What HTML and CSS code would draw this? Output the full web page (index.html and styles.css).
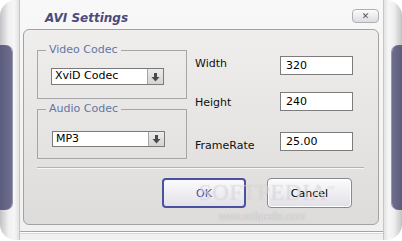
FILE: index.html
```html
<!DOCTYPE html>
<html lang="en">
<head>
  <meta charset="UTF-8" />
  <title>AVI Settings</title>
  <link rel="stylesheet" href="styles.css">
</head>
<body>
  <div class="window">
    <div class="gutter gutter-left"><div class="pill"></div></div>

    <div class="main">
      <div class="titlebar">
        <div class="title">AVI Settings</div>
        <button class="close-btn">&#x2715;</button>
      </div>

      <div class="panel">
        <div class="panel-body">
          <div class="codecs">
            <fieldset class="group group-video">
              <legend>Video Codec</legend>
              <div class="combo">
                <span class="combo-value">XviD Codec</span>
                <span class="combo-arrow">
                  <svg width="9" height="10" viewBox="0 0 9 10"><rect x="3" y="1" width="3" height="4" fill="#4a4a4a"/><path d="M0.5 5 H8.5 L4.5 9.5 Z" fill="#4a4a4a"/></svg>
                </span>
              </div>
            </fieldset>
            <fieldset class="group group-audio">
              <legend>Audio Codec</legend>
              <div class="combo">
                <span class="combo-value">MP3</span>
                <span class="combo-arrow">
                  <svg width="9" height="10" viewBox="0 0 9 10"><rect x="3" y="1" width="3" height="4" fill="#4a4a4a"/><path d="M0.5 5 H8.5 L4.5 9.5 Z" fill="#4a4a4a"/></svg>
                </span>
              </div>
            </fieldset>
          </div>

          <div class="fields">
            <div class="row row-width">
              <label>Width</label>
              <div class="field">320</div>
            </div>
            <div class="row row-height">
              <label>Height</label>
              <div class="field">240</div>
            </div>
            <div class="row row-rate">
              <label>FrameRate</label>
              <div class="field">25.00</div>
            </div>
          </div>
        </div>

        <div class="divider"></div>

        <div class="buttons">
          <button class="btn btn-ok">OK</button>
          <button class="btn btn-cancel">Cancel</button>
        </div>
      </div>

      <div class="bottom-line"></div>
    </div>

    <div class="gutter gutter-right"><div class="pill"></div></div>

    <div class="watermark">
      <div class="wm-big">SOFTPEDIA<sup>&trade;</sup></div>
      <div class="wm-small">www.softpedia.com</div>
    </div>
  </div>
</body>
</html>
```

FILE: styles.css
```css
body {
  margin: 0;
  background: #ffffff;
  font-family: 'DejaVu Sans', Verdana, sans-serif;
  font-size: 11px;
}
.window {
  position: relative;
  display: flex;
  width: 402px;
  height: 240px;
  border-radius: 16px;
  overflow: hidden;
  background: #f2f2f2;
}
.gutter {
  display: flex;
  align-items: flex-start;
}
.gutter-left {
  width: 19px;
  background: linear-gradient(to right, #c2c2c6, #f0f0f0 45%, #f6f6f6 75%, #e2e2e2);
}
.gutter-right {
  width: 18px;
  justify-content: flex-end;
  background: linear-gradient(to left, #c2c2c6, #f0f0f0 45%, #f6f6f6 75%, #e2e2e2);
}
.pill {
  margin-top: 45px;
  width: 12px;
  height: 165px;
  background: linear-gradient(to right, #5c5c7e, #6e6e8e);
}
.gutter-left .pill {
  border-radius: 0 7px 7px 0;
  box-shadow: 1px 0 0 #9898ac;
}
.gutter-right .pill {
  width: 10px;
  border-radius: 7px 0 0 7px;
  background: linear-gradient(to left, #5c5c7e, #6e6e8e);
  box-shadow: -1px 0 0 #9898ac;
}
.main {
  width: 363px;
  display: flex;
  flex-direction: column;
  border-left: 1px solid #c6c6c6;
  border-right: 1px solid #c6c6c6;
  background: linear-gradient(#f8f8f8, #f0f0f0);
}
.titlebar {
  display: flex;
  justify-content: space-between;
  align-items: flex-start;
  height: 29px;
}
.title {
  padding: 11px 0 0 25px;
  line-height: 14px;
  font-size: 12px;
  font-weight: bold;
  font-style: italic;
  color: #4a4a7c;
}
.close-btn {
  margin: 9px 4px 0 0;
  width: 27px;
  height: 14px;
  padding: 0;
  border: 1px solid #b0b0b4;
  border-radius: 4px;
  background: linear-gradient(#fcfcfc, #dedee2);
  color: #555560;
  font-family: 'DejaVu Sans', sans-serif;
  font-size: 9px;
  line-height: 12px;
}
.panel {
  box-sizing: border-box;
  height: 196px;
  margin: 0 4px 0 3px;
  padding: 14px 14px 0 13px;
  border: 1px solid #a2a2a2;
  border-radius: 6px;
  background: linear-gradient(#f0eeec, #dedcdb);
}
.panel-body {
  display: flex;
}
.codecs {
  width: 150px;
}
.group {
  margin: 0;
  padding: 0 13px;
  min-width: 0;
  border: 1px solid #a6a6a8;
}
.group legend {
  margin-left: -5px;
  padding: 0 3px;
  line-height: 12px;
  color: #6276a4;
}
.group-video {
  padding-bottom: 13px;
}
.group-video .combo {
  margin-top: 12px;
  height: 17px;
}
.group-audio {
  margin-top: 4px;
  padding-bottom: 11px;
}
.group-audio .combo {
  margin-top: 16px;
  margin-left: 1px;
  height: 16px;
}
.combo {
  box-sizing: border-box;
  display: flex;
  width: 113px;
  border: 1px solid #7a7a7a;
  background: #ffffff;
}
.combo-value {
  flex: 1;
  padding-left: 3px;
  color: #000000;
  line-height: 14px;
}
.combo-arrow {
  width: 15px;
  display: flex;
  align-items: center;
  justify-content: center;
  border-left: 1px solid #a4a4a4;
  background: linear-gradient(#ececec, #d4d4d4);
}
.fields {
  margin-left: 8px;
  padding-top: 12px;
}
.row {
  display: flex;
  align-items: center;
  height: 19px;
}
.row label {
  width: 85px;
  color: #101010;
}
.row-width label {
  margin-top: -4px;
}
.row-height {
  margin-top: 17px;
}
.row-height label {
  margin-top: 1px;
}
.row-rate {
  margin-top: 21px;
}
.row-rate label {
  margin-top: 7px;
}
.field {
  box-sizing: border-box;
  width: 73px;
  height: 19px;
  padding-left: 5px;
  border: 1px solid #7c7c7c;
  background: #ffffff;
  line-height: 17px;
  color: #000000;
}
.divider {
  margin-top: 8px;
  height: 1px;
  background: #b2b2b2;
  box-shadow: 0 1px 0 #f6f6f6;
}
.buttons {
  display: flex;
  justify-content: flex-end;
  gap: 21px;
  margin-top: 10px;
  padding-right: 12px;
}
.btn {
  box-sizing: border-box;
  height: 30px;
  border-radius: 4px;
  background: linear-gradient(#fbfbfd, #e2e1e8);
  font-family: 'DejaVu Sans', sans-serif;
  font-size: 11px;
  padding: 0;
}
.btn-ok {
  width: 84px;
  border: 2px solid #4a52a0;
  color: #4c4ca4;
}
.btn-cancel {
  width: 85px;
  border: 1px solid #8a8a8e;
  box-shadow: inset 0 0 0 1px #ffffff;
  color: #000000;
}
.bottom-line {
  margin: 6px 0 0;
  height: 1px;
  background: #a4a4a4;
  box-shadow: 0 1px 0 #ffffff, 0 2px 0 #d8d8d8;
}
.watermark {
  position: absolute;
  left: 199px;
  top: 178px;
  text-align: center;
  pointer-events: none;
}
.wm-big {
  font-family: 'Liberation Serif', serif;
  font-size: 23px;
  line-height: 22px;
  letter-spacing: 0.5px;
  color: rgba(255, 255, 255, 0.35);
  text-shadow: 0 0 1px rgba(160, 160, 160, 0.45);
}
.wm-big sup {
  font-size: 7px;
}
.wm-small {
  margin-top: 8px;
  margin-left: -10px;
  font-family: 'Liberation Sans', sans-serif;
  font-size: 10px;
  line-height: 10px;
  color: rgba(255, 255, 255, 0.7);
  text-shadow: 0 0 1px rgba(120, 120, 120, 0.7);
}
```
